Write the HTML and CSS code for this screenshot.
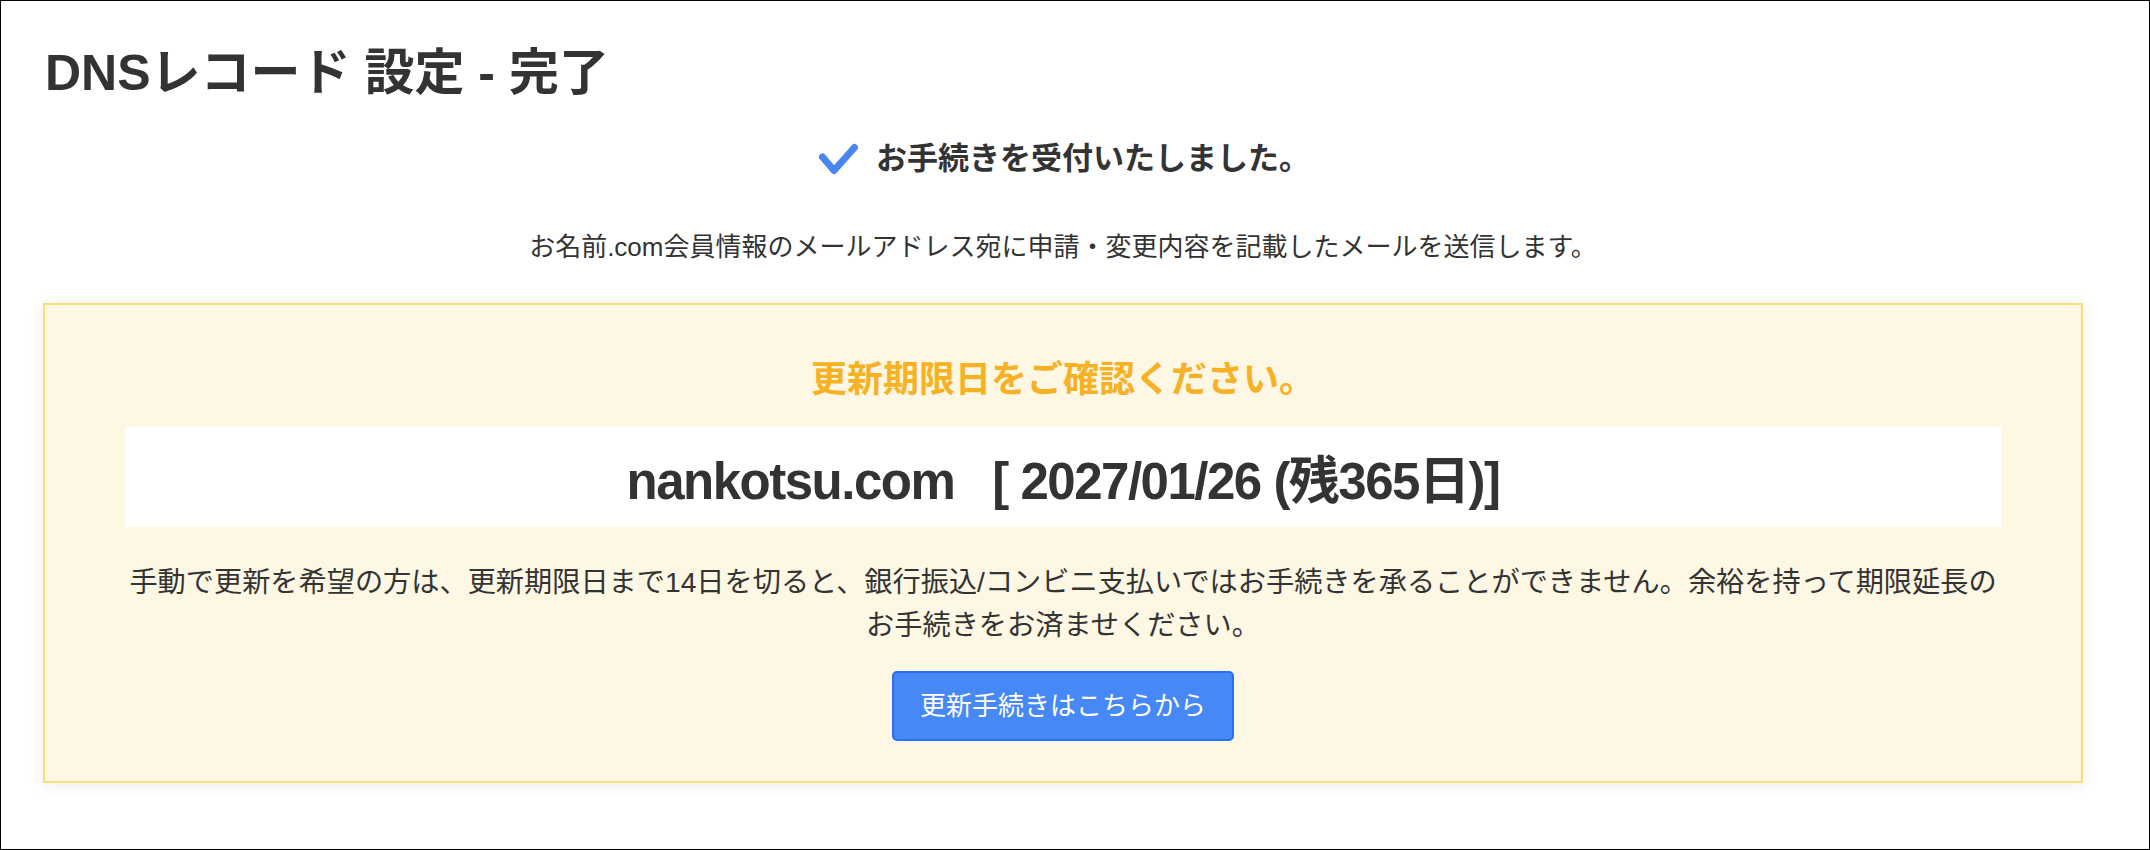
FILE: index.html
```html
<!DOCTYPE html>
<html lang="ja">
<head>
<meta charset="utf-8">
<title>DNSレコード 設定 - 完了</title>
<link rel="stylesheet" href="styles.css">
</head>
<body>
<div class="page">
  <h1 class="title">DNSレコード 設定 - 完了</h1>
  <div class="done">
    <svg class="check" viewBox="0 0 40 32" width="40" height="32" aria-hidden="true">
      <polyline points="4.5,14 16,27.5 36.5,4.5" fill="none" stroke="#4a86f0" stroke-width="7" stroke-linecap="round" stroke-linejoin="round"/>
    </svg>
    <span class="done-text">お手続きを受付いたしました。</span>
  </div>
  <p class="notice">お名前.com会員情報のメールアドレス宛に申請・変更内容を記載したメールを送信します。</p>
  <section class="renew">
    <h2 class="renew-title">更新期限日をご確認ください。</h2>
    <div class="domain-band">nankotsu.com&nbsp;&nbsp;&nbsp;[ 2027/01/26 (残365日)]</div>
    <p class="renew-text">手動で更新を希望の方は、更新期限日まで14日を切ると、銀行振込/コンビニ支払いではお手続きを承ることができません。余裕を持って期限延長のお手続きをお済ませください。</p>
    <div class="renew-action">
      <a class="btn" href="#">更新手続きはこちらから</a>
    </div>
  </section>
</div>
</body>
</html>
```

FILE: styles.css
```css
* { box-sizing: border-box; }
html, body { margin: 0; padding: 0; background: #fff; }
body {
  font-family: "Liberation Sans", "Noto Sans CJK JP", sans-serif;
  color: #333;
}
.page {
  width: 2150px;
  height: 850px;
  border: 1px solid #000;
  padding: 0 66px 0 42px;
  overflow: hidden;
}
.title {
  margin: 37px 0 0 2px;
  font-size: 50px;
  line-height: 70px;
  font-weight: bold;
  color: #333;
}
.done {
  margin-top: 30px;
  display: flex;
  justify-content: center;
  align-items: center;
  gap: 18px;
  height: 42px;
  padding-left: 2px;
}
.check { display: block; }
.done-text {
  font-size: 31px;
  line-height: 42px;
  font-weight: bold;
}
.notice {
  margin: 47px 0 0;
  text-align: center;
  font-size: 26px;
  line-height: 40px;
}
.renew {
  margin-top: 36px;
  background: #fdf7e4;
  border: 2px solid #f9df75;
  box-shadow: 0 2px 14px rgba(0, 0, 0, 0.08);
  padding: 50px 80px 40px;
  text-align: center;
}
.renew-title {
  margin: 0;
  font-size: 36px;
  line-height: 50px;
  font-weight: bold;
  color: #f6b125;
}
.domain-band {
  margin-top: 22px;
  height: 100px;
  background: #fff;
  display: flex;
  justify-content: center;
  align-items: center;
  font-size: 51px;
  letter-spacing: -1.5px;
  font-weight: bold;
  color: #333;
}
.renew-text {
  margin: 34px 0 0;
  font-size: 28.2px;
  line-height: 42.5px;
}
.renew-action {
  margin-top: 25px;
  display: flex;
  justify-content: center;
}
.btn {
  display: block;
  height: 70px;
  padding: 0 26px;
  line-height: 66px;
  background: #4688f5;
  border: 2px solid #2a6ff0;
  border-radius: 5px;
  color: #fff;
  text-decoration: none;
  font-size: 26px;
}
```
